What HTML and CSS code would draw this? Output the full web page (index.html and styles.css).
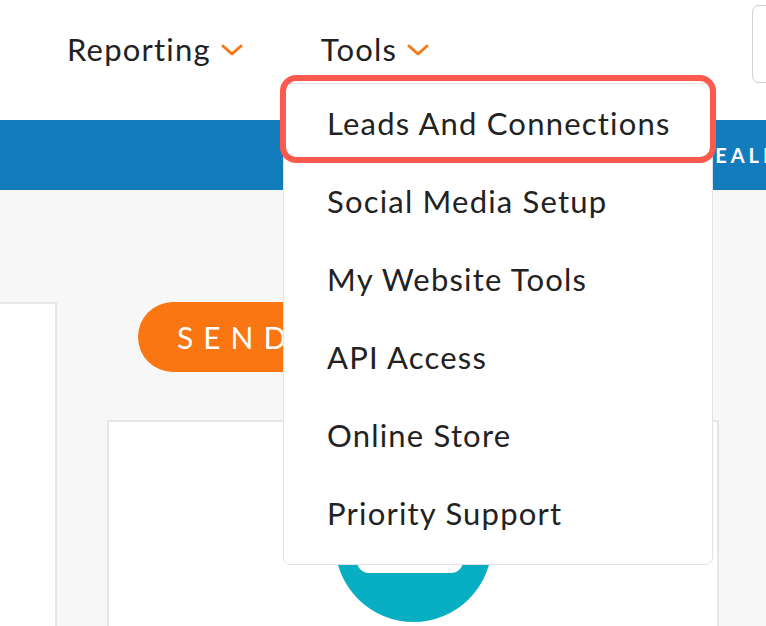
FILE: index.html
```html
<!DOCTYPE html>
<html>
<head>
<meta charset="utf-8">
<link rel="stylesheet" href="styles.css">
</head>
<body>
<div class="page">
  <header class="topbar">
    <nav class="nav">
      <div class="nav-item nav-reporting">
        <span>Reporting</span>
        <svg class="chev" width="22" height="12" viewBox="0 0 22 12"><path d="M2 2 L11 10 L20 2" fill="none" stroke="#f97612" stroke-width="3" stroke-linecap="round" stroke-linejoin="round"/></svg>
      </div>
      <div class="nav-item nav-tools">
        <span>Tools</span>
        <svg class="chev" width="22" height="12" viewBox="0 0 22 12"><path d="M2 2 L11 10 L20 2" fill="none" stroke="#f97612" stroke-width="3" stroke-linecap="round" stroke-linejoin="round"/></svg>
      </div>
    </nav>
    <div class="search-box"></div>
  </header>
  <div class="band"><span class="band-text">DEALER</span></div>
  <main class="main">
    <div class="side-card"></div>
    <div class="center">
      <div class="send-btn">SEND</div>
      <div class="card">
        <div class="avatar"><div class="avatar-bar"></div></div>
      </div>
    </div>
  </main>

  <div class="dropdown">
    <div class="menu-item">Leads And Connections</div>
    <div class="menu-item">Social Media Setup</div>
    <div class="menu-item">My Website Tools</div>
    <div class="menu-item">API Access</div>
    <div class="menu-item">Online Store</div>
    <div class="menu-item">Priority Support</div>
  </div>
  <div class="highlight"></div>
</div>
</body>
</html>
```

FILE: styles.css
```css
html, body {
  margin: 0;
  padding: 0;
}
body {
  font-family: "Lato", "Open Sans", sans-serif;
  color: #222;
  background: #f7f7f7;
}
.page {
  position: relative;
  width: 766px;
  height: 626px;
  overflow: hidden;
}
.topbar {
  height: 120px;
  background: #fff;
  display: flex;
  align-items: flex-start;
}
.nav {
  display: flex;
  padding-left: 67px;
  padding-top: 29px;
}
.nav-item {
  display: flex;
  align-items: center;
  gap: 10px;
  font-size: 31px;
  font-weight: 400;
  letter-spacing: 1.2px;
  line-height: 40px;
  color: #222;
}
.nav-tools {
  margin-left: 78px;
}
.chev {
  margin-top: 2px;
}
.search-box {
  margin-left: auto;
  margin-top: 5px;
  width: 100px;
  height: 76px;
  border: 1px solid #d0d0d0;
  border-radius: 7px;
  margin-right: -88px;
  flex-shrink: 0;
}
.band {
  height: 70px;
  background: #137cbd;
  display: flex;
  align-items: center;
  padding-left: 696px;
  overflow: hidden;
  white-space: nowrap;
}
.band-text {
  color: #fff;
  font-weight: 700;
  font-size: 20px;
  letter-spacing: 4px;
}
.main {
  display: flex;
  padding-top: 112px;
  height: 324px;
}
.side-card {
  width: 55px;
  background: #fff;
  border: 2px solid #e6e6e6;
  border-left: none;
  border-bottom: none;
}
.center {
  margin-left: 50px;
  display: flex;
  flex-direction: column;
  align-items: flex-start;
  gap: 48px;
  width: 612px;
}
.send-btn {
  margin-left: 31px;
  height: 70px;
  padding: 0 40px 0 39px;
  border-radius: 35px;
  background: #f97612;
  color: #fff;
  font-size: 30px;
  letter-spacing: 10px;
  line-height: 70px;
  font-weight: 400;
  white-space: nowrap;
}
.card {
  align-self: stretch;
  flex: 1;
  background: #fff;
  border: 2px solid #e6e6e6;
  border-bottom: none;
  display: flex;
  justify-content: center;
  padding-top: 43px;
}
.avatar {
  width: 157px;
  height: 157px;
  border-radius: 50%;
  background: #08afc2;
  display: flex;
  justify-content: center;
  align-items: flex-start;
  padding-top: 40px;
  box-sizing: border-box;
  flex-shrink: 0;
}
.avatar-bar {
  width: 106px;
  height: 68px;
  background: #fff;
  border-radius: 12px;
  margin-left: -6px;
}
.dropdown {
  position: absolute;
  left: 283px;
  top: 83px;
  width: 428px;
  height: 480px;
  background: #fff;
  border: 1px solid #e2e2e2;
  border-radius: 7px;
}
.menu-item {
  padding-left: 43px;
  font-size: 31px;
  font-weight: 400;
  letter-spacing: 1.2px;
  color: #222;
  height: 78px;
  line-height: 78px;
  white-space: nowrap;
}
.highlight {
  position: absolute;
  left: 280px;
  top: 75px;
  width: 424px;
  height: 76px;
  border: 6px solid #fd5a4e;
  border-radius: 16px;
}
```
